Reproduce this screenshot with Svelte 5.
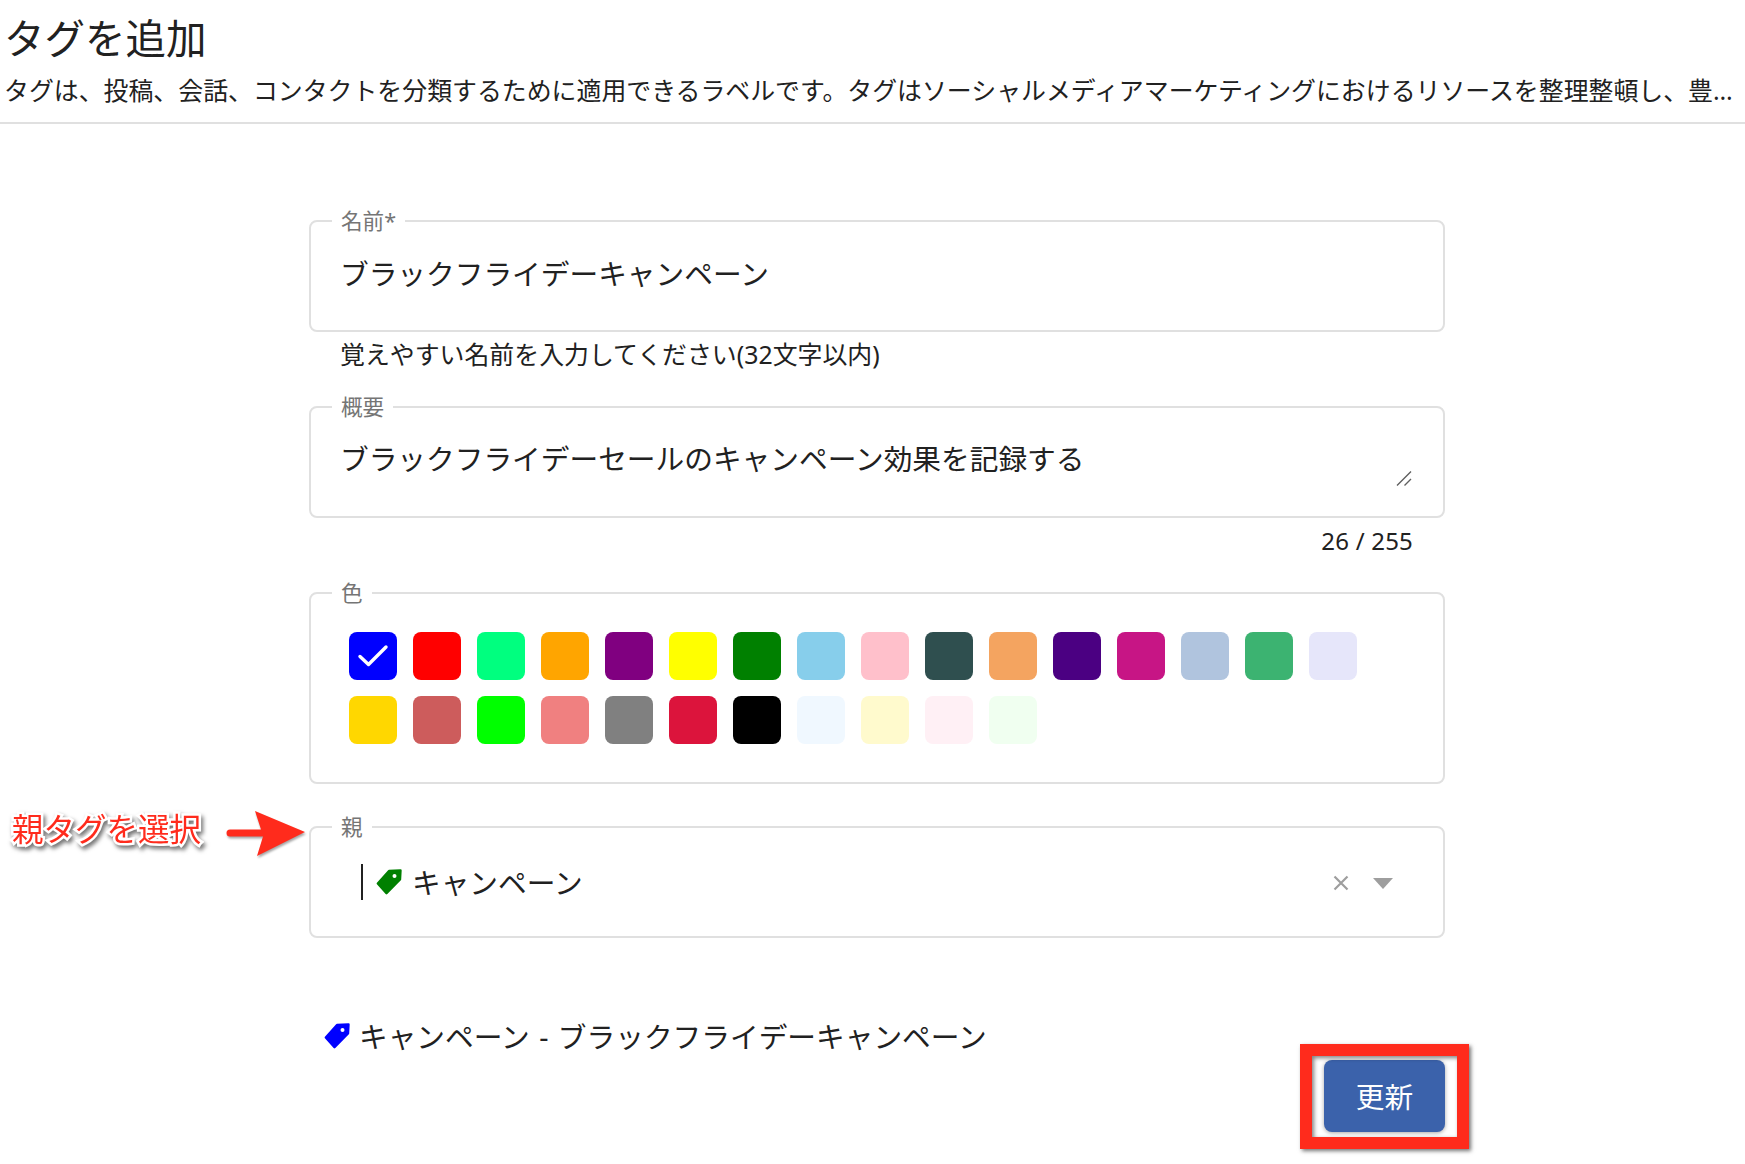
<script>
	const swatches = [
		'#0000ff', '#ff0000', '#00ff7f', '#ffa500', '#800080', '#ffff00', '#008000', '#87ceeb',
		'#ffc0cb', '#2f4f4f', '#f4a460', '#4b0082', '#c71585', '#b0c4de', '#3cb371', '#e6e6fa',
		'#ffd700', '#cd5c5c', '#00ff00', '#f08080', '#808080', '#dc143c', '#000000', '#f0f8ff',
		'#fffacd', '#fff0f5', '#f0fff0'
	];
	const selected = '#0000ff';
	const name = 'ブラックフライデーキャンペーン';
	const description = 'ブラックフライデーセールのキャンペーン効果を記録する';
</script>

{#snippet tag(color)}
	<svg class="tag" width="26" height="26" viewBox="0 0 26 26" aria-hidden="true">
		<path
			d="M24.5 1.5 L13 2 L1.8 14.5 L10.5 24.2 L24 10.5 Z"
			fill={color}
			stroke={color}
			stroke-width="2.4"
			stroke-linejoin="round"
		/>
		<circle cx="18.5" cy="7" r="2" fill="#fff" />
	</svg>
{/snippet}

<div class="page">
	<header>
		<h1>タグを追加</h1>
		<p>タグは、投稿、会話、コンタクトを分類するために適用できるラベルです。タグはソーシャルメディアマーケティングにおけるリソースを整理整頓し、豊富なデータの分析と活用に役立ちます。</p>
	</header>

	<form>
		<fieldset class="name">
			<legend>名前*</legend>
			<input class="control" type="text" value={name} />
		</fieldset>
		<div class="helper">覚えやすい名前を入力してください(32文字以内)</div>

		<fieldset class="desc">
			<legend>概要</legend>
			<textarea class="control" value={description}></textarea>
			<svg class="grip" width="16" height="16" viewBox="0 0 16 16" aria-hidden="true">
				<path d="M1 15.5 L15 1.5 M8.5 15.5 L15 9" stroke="#5f5f5f" stroke-width="1.4" fill="none" />
			</svg>
		</fieldset>
		<div class="counter">26 / 255</div>

		<fieldset class="colors">
			<legend>色</legend>
			<div class="swatches">
				{#each swatches as color}
					<button type="button" class="swatch" style:background={color} aria-label={color}>
						{#if color === selected}
							<svg width="32" height="24" viewBox="0 0 32 24" aria-hidden="true">
								<path d="M3 12.5 L11.5 20.5 L29 3" fill="none" stroke="#fff" stroke-width="3.4" stroke-linecap="round" stroke-linejoin="round" />
							</svg>
						{/if}
					</button>
				{/each}
			</div>
		</fieldset>

		<fieldset class="parent">
			<legend>親</legend>
			<div class="select">
				<span class="caret"></span>
				{@render tag('#008000')}
				<span class="value">キャンペーン</span>
				<svg class="clear" width="16" height="16" viewBox="0 0 16 16" aria-hidden="true">
					<path d="M1.5 1.5 L14.5 14.5 M14.5 1.5 L1.5 14.5" stroke="#9e9e9e" stroke-width="2.2" fill="none" />
				</svg>
				<svg class="drop" width="20" height="11" viewBox="0 0 20 11" aria-hidden="true">
					<path d="M0 0 H20 L10 11 Z" fill="#9e9e9e" />
				</svg>
			</div>
		</fieldset>

		<div class="preview">
			{@render tag('#0000ff')}
			<span>キャンペーン - ブラックフライデーキャンペーン</span>
		</div>

		<div class="actions">
			<div class="submit-wrap">
				<button type="button" class="submit">更新</button>
				<div class="highlight"></div>
			</div>
		</div>
	</form>

	<div class="note">親タグを選択</div>
	<svg class="note-arrow" width="84" height="52" viewBox="0 0 84 52" aria-hidden="true">
		<path
			d="M5 20.5 H36 L30 2 L80 23 L32 47 L38 27.5 H5 Q1.5 27.5 1.5 24 Q1.5 20.5 5 20.5 Z"
			fill="#ff2b1c"
		/>
	</svg>
</div>

<style>
	:global(body) {
		margin: 0;
		background: #fff;
	}

	.page {
		position: relative;
		height: 1164px;
		overflow: hidden;
		color: #212121;
		font-family: "Noto Sans", "Noto Sans CJK JP", sans-serif;
		font-weight: 400;
	}

	header {
		padding: 11px 4px 0 4px;
		height: 111px;
		border-bottom: 2px solid #e0e0e0;
	}

	h1 {
		margin: 0;
		font-size: 40.5px;
		font-weight: 400;
		line-height: 56px;
	}

	header p {
		margin: 6px 0 0;
		font-size: 24.9px;
		line-height: 34px;
		white-space: nowrap;
		overflow: hidden;
		text-overflow: ellipsis;
	}

	form {
		display: flex;
		flex-direction: column;
		width: 1136px;
		margin-left: 309px;
		padding-top: 85px;
	}

	fieldset {
		position: relative;
		margin: 0;
		padding: 0 29px 14px;
		border: 2px solid #e0e0e0;
		border-radius: 8px;
		min-width: 0;
	}

	legend {
		margin-left: -8px;
		padding: 0 9px;
		height: 24px;
		font-size: 21.6px;
		line-height: 24px;
		color: #757575;
	}

	.control {
		display: block;
		box-sizing: border-box;
		width: 100%;
		border: 0;
		outline: 0;
		padding: 0;
		margin: 0;
		background: none;
		color: inherit;
		font: inherit;
		font-size: 28.7px;
	}

	input.control {
		height: 78px;
	}

	.name {
		padding-bottom: 19px;
	}

	.helper {
		margin: 6px 0 25px 31px;
		font-size: 24.9px;
		line-height: 32px;
	}

	.desc {
		padding-bottom: 32px;
	}

	textarea.control {
		height: 65px;
		padding-top: 20px;
		line-height: 40px;
		resize: none;
	}

	.grip {
		position: absolute;
		right: 31px;
		bottom: 30px;
	}

	.counter {
		margin: 7px 32px 24px 0;
		text-align: right;
		font-size: 24px;
		line-height: 32px;
		letter-spacing: 0.2px;
	}

	.colors {
		padding: 27px 30px 38px 38px;
		margin-bottom: 31px;
	}

	.colors legend {
		margin-left: -17px;
	}

	.swatches {
		display: grid;
		grid-template-columns: repeat(16, 48px);
		grid-auto-rows: 48px;
		gap: 16px;
	}

	.swatch {
		display: flex;
		align-items: center;
		justify-content: center;
		padding: 0;
		border: 0;
		border-radius: 8px;
	}

	.parent {
		padding-bottom: 36px;
	}

	.select {
		display: flex;
		align-items: center;
		height: 36px;
		margin: 25px 21px 0 21px;
	}

	.caret {
		width: 2px;
		height: 36px;
		background: #212121;
		margin-right: 13px;
	}

	.tag {
		flex: none;
	}

	.value {
		margin: 0 0 2px 10px;
		font-size: 28.7px;
	}

	.clear {
		margin: 2px 0 0 auto;
	}

	.drop {
		margin: 2px 0 0 24px;
	}

	.preview {
		display: flex;
		align-items: center;
		gap: 9px;
		height: 40px;
		margin: 78px 0 0 15px;
		font-size: 28.7px;
	}

	.preview span {
		margin-bottom: 2px;
		word-spacing: 2px;
	}

	.actions {
		display: flex;
		justify-content: flex-end;
		margin-top: 4px;
	}

	.submit-wrap {
		position: relative;
	}

	.submit {
		display: block;
		width: 121px;
		height: 72px;
		padding: 0 0 2px;
		border: 0;
		border-radius: 8px;
		background: #3b62ab;
		color: #fff;
		font: inherit;
		font-size: 28.7px;
		box-shadow: 0 1px 4px rgba(0, 0, 0, 0.35);
	}

	.highlight {
		position: absolute;
		inset: -16px -24px -17px -24px;
		border: 12px solid #ff2b1c;
		box-shadow: 2px 2px 4px rgba(0, 0, 0, 0.55), inset 2px 2px 4px rgba(0, 0, 0, 0.5);
		pointer-events: none;
	}

	.note {
		position: absolute;
		left: 12px;
		top: 806px;
		font-size: 31.5px;
		line-height: 46px;
		color: #ff2b1c;
		-webkit-text-stroke: 5px #fff;
		paint-order: stroke fill;
		filter: drop-shadow(2px 3px 2px rgba(0, 0, 0, 0.55));
	}

	.note-arrow {
		position: absolute;
		left: 225px;
		top: 809px;
		filter: drop-shadow(1px 2px 1px rgba(0, 0, 0, 0.35));
	}
</style>
